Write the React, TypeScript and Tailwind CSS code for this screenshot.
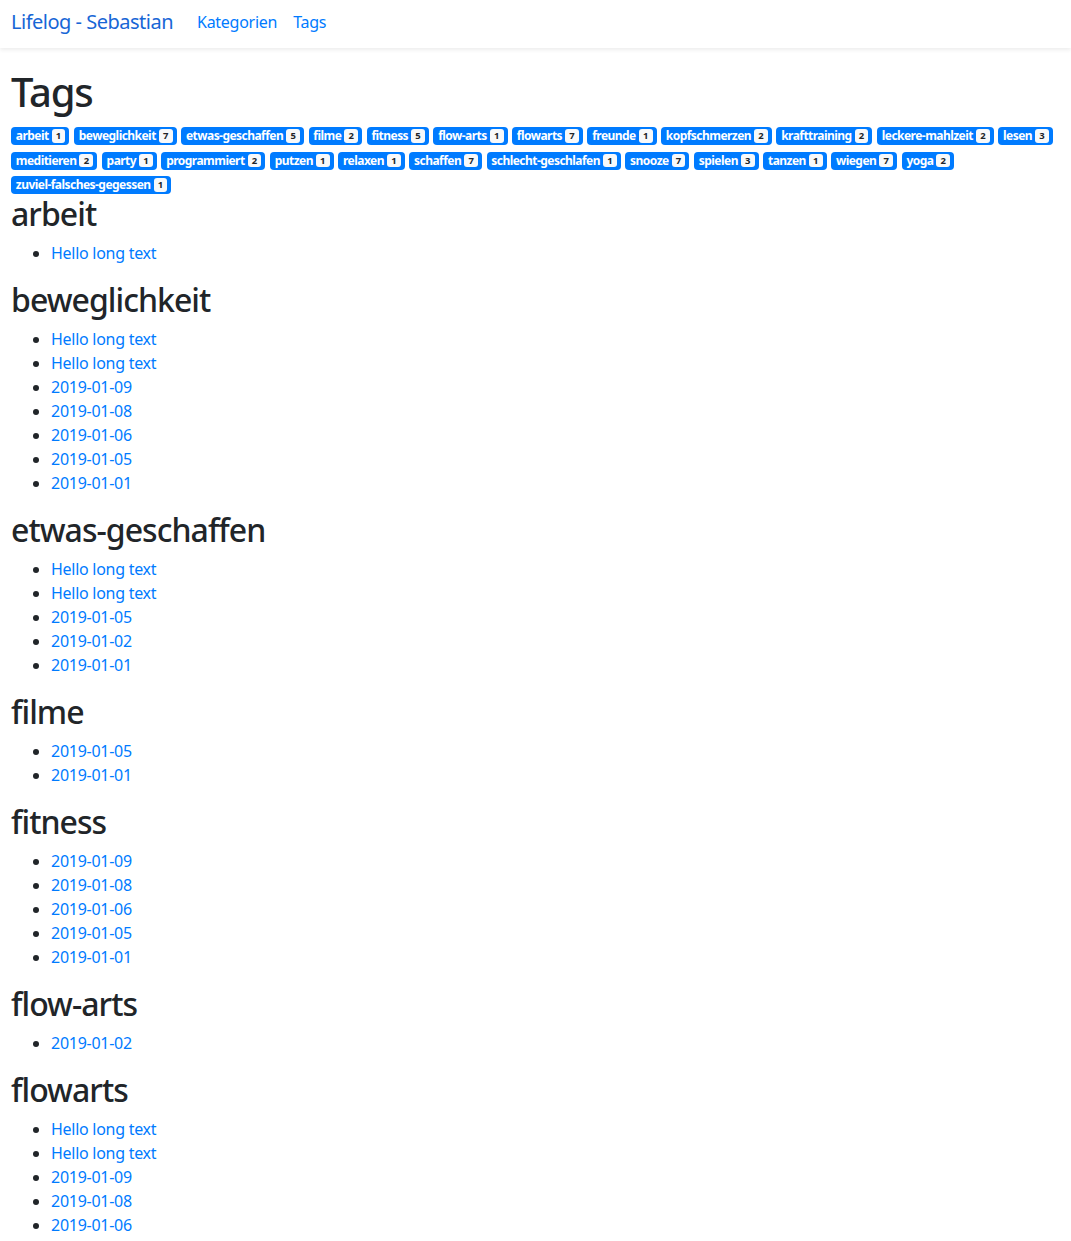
import React from 'react';

const tags: [string, number][] = [
  ['arbeit', 1],
  ['beweglichkeit', 7],
  ['etwas-geschaffen', 5],
  ['filme', 2],
  ['fitness', 5],
  ['flow-arts', 1],
  ['flowarts', 7],
  ['freunde', 1],
  ['kopfschmerzen', 2],
  ['krafttraining', 2],
  ['leckere-mahlzeit', 2],
  ['lesen', 3],
  ['meditieren', 2],
  ['party', 1],
  ['programmiert', 2],
  ['putzen', 1],
  ['relaxen', 1],
  ['schaffen', 7],
  ['schlecht-geschlafen', 1],
  ['snooze', 7],
  ['spielen', 3],
  ['tanzen', 1],
  ['wiegen', 7],
  ['yoga', 2],
  ['zuviel-falsches-gegessen', 1],
];

const H = 'Hello long text';

const sections: { tag: string; entries: string[] }[] = [
  { tag: 'arbeit', entries: [H] },
  { tag: 'beweglichkeit', entries: [H, H, '2019-01-09', '2019-01-08', '2019-01-06', '2019-01-05', '2019-01-01'] },
  { tag: 'etwas-geschaffen', entries: [H, H, '2019-01-05', '2019-01-02', '2019-01-01'] },
  { tag: 'filme', entries: ['2019-01-05', '2019-01-01'] },
  { tag: 'fitness', entries: ['2019-01-09', '2019-01-08', '2019-01-06', '2019-01-05', '2019-01-01'] },
  { tag: 'flow-arts', entries: ['2019-01-02'] },
  { tag: 'flowarts', entries: [H, H, '2019-01-09', '2019-01-08', '2019-01-06', '2019-01-05', '2019-01-01'] },
];

const TagBadge: React.FC<{ name: string; count: number }> = ({ name, count }) => (
  <a
    href={`#${name}`}
    className="inline-flex h-[18px] items-center rounded bg-[#007bff] pl-[4.8px] pr-[4px] text-[12px] font-bold leading-none tracking-[-0.045em] text-white"
  >
    {name}
    <span className="ml-[3px] rounded-[3px] bg-[#f8f9fa] px-[4.2px] py-[2px] text-[9.5px] font-bold leading-none tracking-normal text-[#212529]">
      {count}
    </span>
  </a>
);

export default function App() {
  return (
    <div
      className="min-h-screen bg-white tracking-[-0.017em] text-[#212529]"
      style={{ fontFamily: '"Noto Sans", "Open Sans", sans-serif' }}
    >
      <nav className="flex h-12 items-center px-[11px] pb-1 shadow-[0_2px_4px_rgba(0,0,0,0.075)]">
        <a href="#" className="mr-4 text-[20px] leading-[30px] tracking-[-0.025em] text-[#1766d6]">
          Lifelog - Sebastian
        </a>
        <a href="#" className="px-2 text-[16px] text-[#007bff]">
          Kategorien
        </a>
        <a href="#" className="px-2 text-[16px] text-[#007bff]">
          Tags
        </a>
      </nav>

      <main className="px-[11px] pt-5">
        <h1 className="mb-2 text-[40px] font-medium leading-[1.2] tracking-[-0.03em]">Tags</h1>
        <div className="flex flex-wrap gap-x-[4.5px] gap-y-[6.5px] pt-[3px] pb-[1px]">
          {tags.map(([name, count]) => (
            <TagBadge key={name} name={name} count={count} />
          ))}
        </div>

        {sections.map((s) => (
          <section key={s.tag} id={s.tag}>
            <h2 className="mb-2 text-[32px] font-medium leading-[38px] tracking-[-0.03em]">{s.tag}</h2>
            <ul className="mb-4 list-disc pl-10">
              {s.entries.map((e, i) => (
                <li key={i} className="leading-6">
                  <a href="#" className="text-[#007bff]">
                    {e}
                  </a>
                </li>
              ))}
            </ul>
          </section>
        ))}
      </main>
    </div>
  );
}
